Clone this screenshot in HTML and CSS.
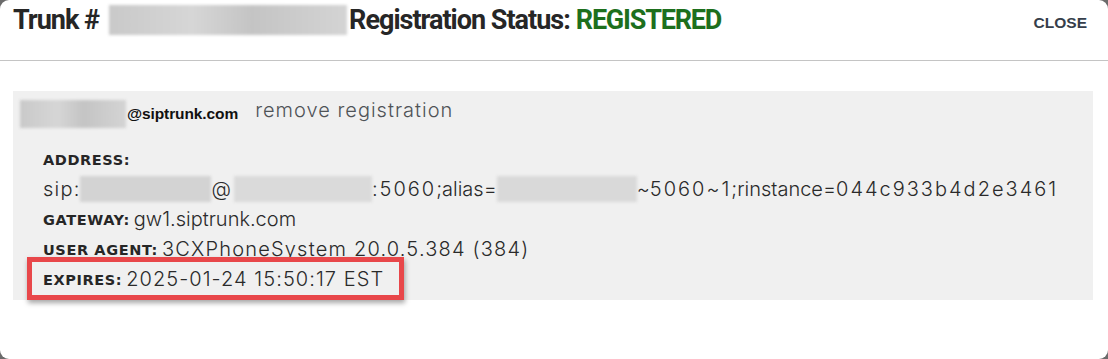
FILE: index.html
```html
<!DOCTYPE html>
<html>
<head>
<meta charset="utf-8">
<link rel="stylesheet" href="styles.css">
</head>
<body>
<div class="dialog">
  <div class="header">
    <h1 class="title"><span class="t1">Trunk #</span><span class="redact r-title"></span><span class="t2">Registration Status:</span><span class="ok">REGISTERED</span></h1>
    <a class="close">CLOSE</a>
  </div>
  <div class="content">
    <div class="panel">
      <div class="account">
        <span class="redact r-user"></span><span class="domain">@siptrunk.com</span>
        <a class="remove">remove registration</a>
      </div>
      <div class="details">
        <div class="row"><span class="label">ADDRESS:</span></div>
        <div class="row value"><span class="sip">sip:</span><span class="redact r-a1"></span>@<span class="redact r-a2"></span><span class="n">:5060</span>;alias=<span class="redact r-a3"></span>~<span class="n">5060~1</span>;rinstance=<span class="n">044c933b4d2e3461</span></div>
        <div class="row"><span class="label">GATEWAY:</span><span class="value">gw1.siptrunk.com</span></div>
        <div class="row"><span class="label">USER AGENT:</span><span class="value ua">3CXPhoneSystem 20.0.5.384 (384)</span></div>
        <div class="row"><span class="expires"><span class="label">EXPIRES:</span><span class="value exp">2025-01-24 15:50:17 EST</span></span></div>
      </div>
    </div>
  </div>
</div>
</body>
</html>
```
FILE: styles.css
```css
html, body {
  margin: 0;
  padding: 0;
}
body {
  background: #6b6b6b;
  width: 1108px;
  height: 359px;
  overflow: hidden;
}
.dialog {
  width: 1108px;
  height: 359px;
  background: #ffffff;
  border-radius: 9px;
  overflow: hidden;
}
.header {
  height: 61px;
  border-bottom: 1px solid #c4c4c4;
  display: flex;
  justify-content: space-between;
  align-items: flex-start;
  padding: 5px 21px 0 13px;
  box-sizing: border-box;
}
.title {
  margin: 0;
  font-family: Roboto, "Liberation Sans", sans-serif;
  font-weight: 700;
  font-size: 27px;
  line-height: 30px;
  letter-spacing: -1px;
  color: #262626;
  display: flex;
  align-items: center;
  white-space: pre;
}
.t1 {
  margin-right: 10px;
}
.r-title {
  margin-right: 2px;
}
.t2 {
  margin-right: 6px;
}
.ok {
  color: #1d6f1d;
  letter-spacing: -1.2px;
}
.close {
  margin-top: 9px;
  font-family: "Liberation Sans", Arial, sans-serif;
  font-weight: bold;
  font-size: 15.5px;
  color: #363e4b;
}
.content {
  padding: 30px 15px 0 13px;
}
.panel {
  background: #f0f0f0;
  height: 209px;
  box-sizing: border-box;
  padding: 9px 0 0 7px;
}
.account {
  display: flex;
  align-items: center;
  height: 28px;
}
.domain {
  font-family: "Liberation Sans", Arial, sans-serif;
  font-weight: bold;
  font-size: 15.5px;
  letter-spacing: -0.1px;
  color: #111;
  margin-left: 1px;
}
.remove {
  margin-left: 17px;
  font-family: Inter, "Open Sans", sans-serif;
  font-weight: 300;
  font-size: 20px;
  letter-spacing: 1px;
  color: #4f5357;
  position: relative;
  top: -4px;
}
.details {
  margin-top: 16px;
  padding-left: 23px;
}
.row {
  height: 30px;
  line-height: 30px;
  display: flex;
  align-items: center;
  white-space: pre;
}
.label {
  font-family: "DejaVu Sans", Verdana, sans-serif;
  font-weight: bold;
  font-size: 14.5px;
  color: #262626;
  letter-spacing: 0.6px;
  margin-right: 4px;
  position: relative;
  top: 1px;
}
.value {
  font-family: Inter, "Open Sans", sans-serif;
  font-weight: 300;
  font-size: 20px;
  color: #2a2a2a;
  display: inline-flex;
  align-items: center;
}
.row.value {
  display: flex;
}
.sip {
  letter-spacing: 1.2px;
}
.n {
  letter-spacing: 2px;
}
.ua {
  letter-spacing: 1.2px;
}
.exp {
  letter-spacing: 1.05px;
}
.expires {
  position: relative;
  display: inline-flex;
  align-items: center;
  height: 30px;
}
.expires::after {
  content: "";
  position: absolute;
  left: -16px;
  right: -20px;
  top: -7px;
  bottom: -6px;
  border: 5px solid #e8474a;
  box-shadow: 1px 3px 5px rgba(0,0,0,0.35);
}
.redact {
  display: inline-block;
  background: linear-gradient(90deg, #c9c9c9 0%, #d6d6d6 35%, #c4c4c4 60%, #d4d4d4 100%);
  filter: blur(1.5px);
}
.r-title {
  width: 238px;
  height: 30px;
}
.r-user {
  width: 106px;
  height: 28px;
}
.r-a1 {
  width: 131px;
  height: 26px;
  background: #d3d3d3;
}
.r-a2 {
  width: 138px;
  height: 26px;
  margin-left: 3px;
  background: #dadada;
}
.r-a3 {
  width: 140px;
  height: 26px;
  background: #d9d9d9;
}
```
